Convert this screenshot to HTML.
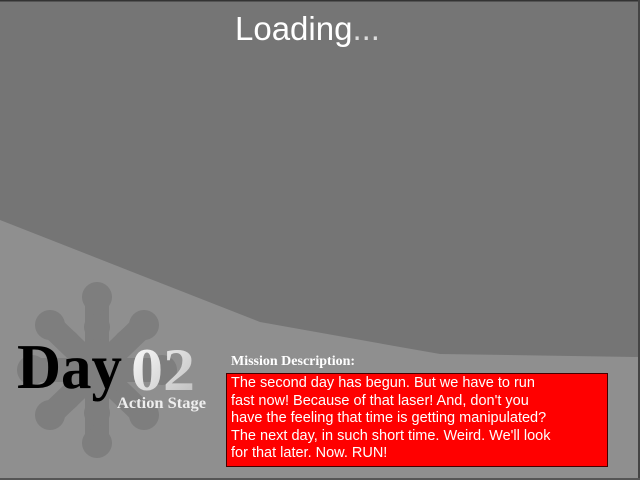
<!DOCTYPE html>
<html><head><style>
body{margin:0;width:640px;height:480px;overflow:hidden;background:#737373;position:relative;font-family:"Liberation Sans",sans-serif}
.t{position:absolute;white-space:nowrap}
</style></head><body>
<svg width="640" height="480" style="position:absolute;left:0;top:0">
<rect width="640" height="480" fill="#757575"/>
<polygon points="0,220 260,322 400,347 440,354 640,357 640,480 0,480" fill="#8f8f8f"/>
<g stroke="#7e7e7e" stroke-width="24" stroke-linecap="round" fill="#7e7e7e">
<line x1="97" y1="370" x2="97" y2="297"/>
<line x1="97" y1="370" x2="97" y2="443"/>
<line x1="97" y1="370" x2="50" y2="325"/>
<line x1="97" y1="370" x2="144" y2="325"/>
<line x1="97" y1="370" x2="50" y2="415"/>
<line x1="97" y1="370" x2="144" y2="415"/>
<line x1="97" y1="370" x2="32" y2="370"/>
<line x1="97" y1="370" x2="162" y2="370"/>
</g>
<g fill="#7e7e7e">
<circle cx="97" cy="297" r="15"/><circle cx="97" cy="443" r="15"/>
<circle cx="50" cy="325" r="15"/><circle cx="144" cy="325" r="15"/>
<circle cx="50" cy="415" r="15"/><circle cx="144" cy="415" r="15"/>
<circle cx="32" cy="370" r="15"/><circle cx="162" cy="370" r="15"/>
<circle cx="97" cy="327" r="13"/><circle cx="97" cy="413" r="13"/>
<circle cx="68" cy="342" r="12"/><circle cx="126" cy="342" r="12"/>
<circle cx="68" cy="398" r="12"/><circle cx="126" cy="398" r="12"/>
</g>
<rect x="0" y="0" width="640" height="1.5" fill="#333"/>
<rect x="638" y="0" width="2" height="480" fill="#444"/>
<rect x="0" y="478" width="640" height="2" fill="#555"/>
<defs><linearGradient id="g" x1="0" y1="0" x2="1" y2="1"><stop offset="0" stop-color="#fff"/><stop offset="1" stop-color="#bbb"/></linearGradient></defs>
<text x="17" y="388" font-family="Liberation Serif,serif" font-weight="bold" font-size="64" fill="#000" textLength="105" lengthAdjust="spacingAndGlyphs">Day</text>
<text x="131" y="390" font-family="Liberation Serif,serif" font-weight="bold" font-size="60" fill="url(#g)" textLength="64" lengthAdjust="spacingAndGlyphs">02</text>
<text x="117" y="408" font-family="Liberation Serif,serif" font-weight="bold" font-size="16" fill="#eee" textLength="89" lengthAdjust="spacingAndGlyphs">Action Stage</text>
</svg>
<div class="t" style="left:235px;top:10px;font-size:33px;color:#fff">Loading<span style="color:#ddd">...</span></div>
<div class="t" style="left:231px;top:354px;font-family:'Liberation Serif',serif;font-weight:bold;font-size:14px;color:#fff">Mission Description:</div>
<div style="position:absolute;left:226px;top:373px;background:#f00;border:1px solid #400;color:#fff;font-size:14.5px;line-height:17.5px;padding:1px 0 0 4px;box-sizing:border-box;width:382px;height:94px">The second day has begun. But we have to run<br>fast now! Because of that laser! And, don't you<br>have the feeling that time is getting manipulated?<br>The next day, in such short time. Weird. We'll look<br>for that later. Now. RUN!</div>
</body></html>
